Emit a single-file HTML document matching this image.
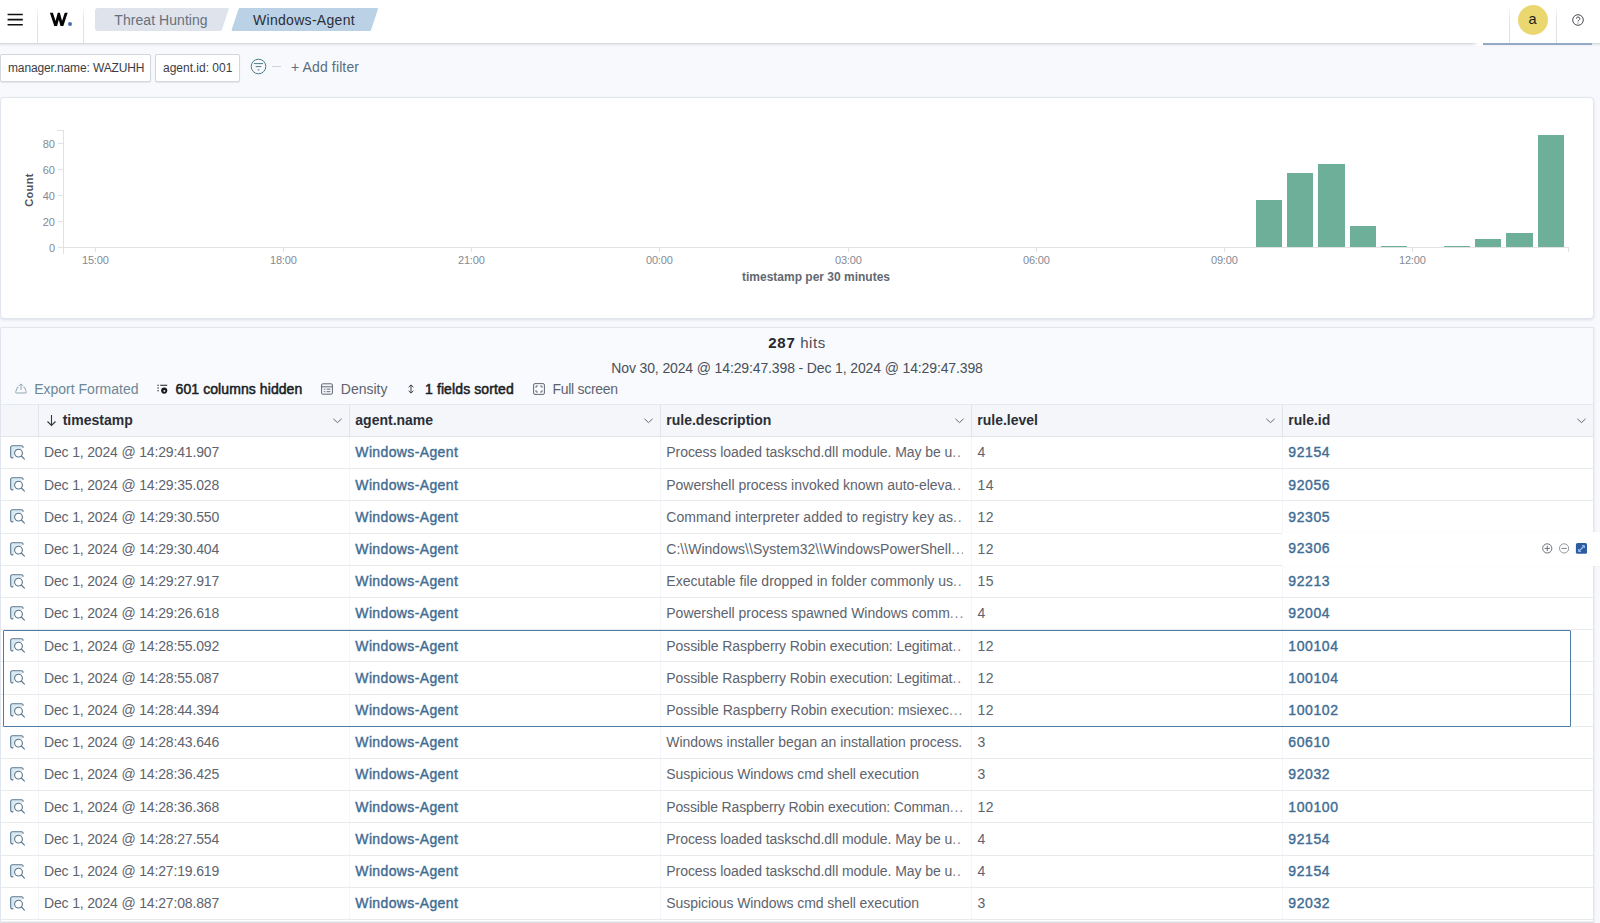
<!DOCTYPE html>
<html><head><meta charset="utf-8"><title>Threat Hunting</title>
<style>
*{box-sizing:border-box;margin:0;padding:0}
html,body{width:1600px;height:923px;overflow:hidden}
body{background:#f8f9fc;font-family:"Liberation Sans",sans-serif;color:#343741;position:relative;font-size:14px}
div,svg,span{position:absolute}
.hdr{left:0;top:0;width:1600px;height:44px;background:#fff;border-bottom:1px solid #d7d9de;box-shadow:0 1px 2px rgba(150,155,170,.22)}
.vd{width:1px;background:linear-gradient(#fff 15%,#dfe2e7 45%);top:0;height:43px}
.bc{top:9px;height:23px;font-size:14px;line-height:23px;text-align:center;white-space:nowrap}
.pill{top:54px;height:28px;background:#fff;border:1px solid #d2d6dd;border-radius:2px;font-size:12px;line-height:26px;color:#3a3d45;white-space:nowrap;padding-left:6px;box-shadow:0 1px 1px rgba(150,160,180,.2)}
.panel{background:#fff;border:1px solid #e1e6ee;border-radius:4px;box-shadow:0 1px 3px rgba(120,135,160,.22)}
.ax{font-size:11px;color:#848a93;white-space:nowrap;line-height:12px}
.bar{background:#6eaf99}
.tb{top:378.5px;height:20px;line-height:20px;font-size:14px;white-space:nowrap}
.sb{font-weight:400;color:#1a1c21;-webkit-text-stroke:0.5px #1a1c21}
.th{top:410.3px;height:20px;line-height:20px;font-size:14px;font-weight:700;color:#2b2e36;white-space:nowrap}
.clh{width:1px;background:#e1e5eb;top:404px;height:33px}
.cl{width:1px;background:#f5f6f9;top:437px;height:483px}
.rline{left:1px;width:1592px;height:1px;background:#e8eaee}
.c{height:20px;line-height:20px;font-size:14px;white-space:nowrap;color:#5e636d}
.ts{left:44px;letter-spacing:-0.16px}
.ag{left:355.3px;color:#3f6d94;-webkit-text-stroke:0.4px #3f6d94;letter-spacing:0.37px}
.ds{left:666.3px;width:296.6px;overflow:hidden}
.lv{left:977.6px;letter-spacing:0.3px}
.id{left:1288.3px;color:#3f6d94;-webkit-text-stroke:0.4px #3f6d94;letter-spacing:0.58px}
.insp{left:9.8px}
.chev{top:415px}
.ds i{font-style:normal;letter-spacing:0.9px;color:#80858e;position:static}

</style></head><body>
<!-- header -->
<div class="hdr"></div>
<svg style="left:7px;top:13px" width="17" height="14" viewBox="0 0 17 14"><path d="M0.6 1.5h15.2M0.6 6.6h15.2M0.6 11.7h15.2" stroke="#111" stroke-width="1.6" fill="none"/></svg>
<div class="vd" style="left:37px"></div>
<div class="vd" style="left:83px"></div>
<svg style="left:49px;top:12px" width="26" height="16" viewBox="0 0 26 16"><defs><clipPath id="wc"><rect x="0" y="0.8" width="20" height="13.1"/></clipPath></defs><path clip-path="url(#wc)" d="M1.76 -1.2L6.7 13.9 9.8 2.2 12.9 13.9 17.84 -1.2" stroke="#050505" stroke-width="2.8" fill="none" stroke-linejoin="miter" stroke-miterlimit="10"/><circle cx="21" cy="12" r="2.05" fill="#4872a8"/></svg>
<svg style="left:95px;top:8px" width="290" height="23" viewBox="0 0 290 23">
 <path d="M3 1H132.8L125.8 22H3a2 2 0 0 1-2-2V3a2 2 0 0 1 2-2z" fill="#dee3ec" stroke="#dee3ec" stroke-width="2" stroke-linejoin="round"/>
 <path d="M144.6 1H282L275 22H137.6z" fill="#bbd2e6" stroke="#bbd2e6" stroke-width="2" stroke-linejoin="round"/>
</svg>
<div class="bc" style="left:95px;width:132px;color:#69707d;letter-spacing:0.05px">Threat Hunting</div>
<div class="bc" style="left:232px;width:144px;color:#2b2e36;letter-spacing:0.3px">Windows-Agent</div>
<!-- right header -->
<div class="vd" style="left:1509px"></div>
<div class="vd" style="left:1556px"></div>
<div style="left:1517.5px;top:4.5px;width:30px;height:30px;border-radius:15px;background:#ebd770"></div>
<div style="left:1517.5px;top:4.5px;width:30px;height:30px;line-height:29px;text-align:center;font-size:14.5px;color:#1a1a1a">a</div>
<svg style="left:1571.3px;top:12.7px" width="14" height="14" viewBox="0 0 14 14" fill="none" stroke="#343741" stroke-width="0.9"><circle cx="7" cy="7" r="5.3"/><path d="M5.4 5.7a1.7 1.7 0 1 1 2.5 1.5c-.6.3-.9.7-.9 1.2" /><circle cx="7" cy="9.9" r=".5" fill="#343741" stroke="none"/></svg>
<div style="left:1472px;top:43px;width:11px;height:3px;background:linear-gradient(90deg,rgba(255,255,255,0),#fff 60%)"></div>
<div style="left:1483px;top:43.3px;width:109px;height:1.8px;background:#93aac5"></div>
<!-- filter bar -->
<div class="pill" style="left:0px;width:151px;padding-left:7px;letter-spacing:-0.13px">manager.name: WAZUHH</div>
<div class="pill" style="left:155px;width:85px;padding-left:7px">agent.id: 001</div>
<svg style="left:250px;top:58.3px" width="18" height="18" viewBox="0 0 18 18" fill="none" stroke="#4d7b85" stroke-width="1"><circle cx="8.5" cy="8.5" r="7.3"/><path d="M3.9 5.6h9.2M5.7 8.6h5.6M7.6 11.9h1.8"/></svg>
<div style="left:272px;top:66px;width:9px;height:1px;background:#cdd3dc"></div>
<div style="left:291px;top:57px;font-size:14px;line-height:20px;color:#5a6e80;white-space:nowrap;letter-spacing:0.13px">+ Add filter</div>

<div class="panel" style="left:0px;top:97px;width:1594px;height:222px"></div>
<div style="left:63px;top:130px;width:1px;height:124px;background:#e0e2e6"></div>
<div style="left:57px;top:130px;width:6px;height:1px;background:#e0e2e6"></div>
<div style="left:63px;top:247px;width:1506px;height:1px;background:#e0e2e6"></div>
<div style="left:1568px;top:247px;width:1px;height:5px;background:#e0e2e6"></div>
<div class="ax" style="left:30px;width:25px;text-align:right;top:137.6px">80</div>
<div style="left:58px;top:143px;width:5px;height:1px;background:#e0e2e6"></div>
<div class="ax" style="left:30px;width:25px;text-align:right;top:163.6px">60</div>
<div style="left:58px;top:169px;width:5px;height:1px;background:#e0e2e6"></div>
<div class="ax" style="left:30px;width:25px;text-align:right;top:189.6px">40</div>
<div style="left:58px;top:195px;width:5px;height:1px;background:#e0e2e6"></div>
<div class="ax" style="left:30px;width:25px;text-align:right;top:215.6px">20</div>
<div style="left:58px;top:221px;width:5px;height:1px;background:#e0e2e6"></div>
<div class="ax" style="left:30px;width:25px;text-align:right;top:241.6px">0</div>
<div style="left:58px;top:247px;width:5px;height:1px;background:#e0e2e6"></div>
<div style="left:-1.2px;top:182.9px;width:60px;height:14px;line-height:14px;text-align:center;font-size:11px;font-weight:700;letter-spacing:0.35px;color:#4d525c;transform:rotate(-90deg);transform-origin:center">Count</div>
<div class="ax" style="left:70.3px;width:50px;text-align:center;top:254px;letter-spacing:-0.18px">15:00</div>
<div style="left:94.6px;top:247px;width:1px;height:5px;background:#e0e2e6"></div>
<div class="ax" style="left:258.3px;width:50px;text-align:center;top:254px;letter-spacing:-0.18px">18:00</div>
<div style="left:282.6px;top:247px;width:1px;height:5px;background:#e0e2e6"></div>
<div class="ax" style="left:446.3px;width:50px;text-align:center;top:254px;letter-spacing:-0.18px">21:00</div>
<div style="left:470.6px;top:247px;width:1px;height:5px;background:#e0e2e6"></div>
<div class="ax" style="left:634.3px;width:50px;text-align:center;top:254px;letter-spacing:-0.18px">00:00</div>
<div style="left:658.6px;top:247px;width:1px;height:5px;background:#e0e2e6"></div>
<div class="ax" style="left:823.3px;width:50px;text-align:center;top:254px;letter-spacing:-0.18px">03:00</div>
<div style="left:847.6px;top:247px;width:1px;height:5px;background:#e0e2e6"></div>
<div class="ax" style="left:1011.3px;width:50px;text-align:center;top:254px;letter-spacing:-0.18px">06:00</div>
<div style="left:1035.6px;top:247px;width:1px;height:5px;background:#e0e2e6"></div>
<div class="ax" style="left:1199.3px;width:50px;text-align:center;top:254px;letter-spacing:-0.18px">09:00</div>
<div style="left:1223.6px;top:247px;width:1px;height:5px;background:#e0e2e6"></div>
<div class="ax" style="left:1387.3px;width:50px;text-align:center;top:254px;letter-spacing:-0.18px">12:00</div>
<div style="left:1411.6px;top:247px;width:1px;height:5px;background:#e0e2e6"></div>
<div style="left:716px;width:200px;text-align:center;top:269.5px;font-size:12px;line-height:14px;font-weight:700;color:#626872;white-space:nowrap">timestamp per 30 minutes</div>
<div class="bar" style="left:1255.6px;top:200px;width:26.4px;height:47.2px"></div>
<div class="bar" style="left:1286.9px;top:172.6px;width:26.4px;height:74.6px"></div>
<div class="bar" style="left:1318.2px;top:163.9px;width:26.4px;height:83.3px"></div>
<div class="bar" style="left:1349.6px;top:226px;width:26.4px;height:21.2px"></div>
<div class="bar" style="left:1381px;top:245.7px;width:26.4px;height:1.5px"></div>
<div class="bar" style="left:1443.7px;top:245.7px;width:26.4px;height:1.5px"></div>
<div class="bar" style="left:1475px;top:239px;width:26.4px;height:8.2px"></div>
<div class="bar" style="left:1506.4px;top:232.5px;width:26.4px;height:14.7px"></div>
<div class="bar" style="left:1537.8px;top:134.7px;width:26.4px;height:112.5px"></div>
<div class="panel" style="left:0px;top:327px;width:1594px;height:620px;background:#f8fafd;border-radius:2px 0 0 0"></div>
<div style="left:1px;top:404px;width:1592px;height:33px;background:#f4f6fa;border-top:1px solid #e6e9ef;border-bottom:1px solid #e1e5eb"></div>
<div style="left:1px;top:437px;width:1592px;height:486px;background:#fff"></div>
<div style="left:1px;top:920.5px;width:1592px;height:3px;background:linear-gradient(#f1f2f5 0,#f1f2f5 35%,#d9dbdf 50%)"></div>
<div style="left:0;width:1594px;top:332.6px;text-align:center;font-size:15px;line-height:20px;color:#4a4f59;white-space:nowrap;letter-spacing:0.55px"><b style="color:#25282f;letter-spacing:0.75px">287</b> hits</div>
<div style="left:0;width:1594px;top:358px;text-align:center;font-size:14px;line-height:20px;color:#4a4f59;white-space:nowrap;letter-spacing:-0.13px">Nov 30, 2024 @ 14:29:47.398 - Dec 1, 2024 @ 14:29:47.398</div>
<svg style="left:14.6px;top:383.4px" width="12" height="11" viewBox="0 0 12 11" fill="none" stroke="#8ea7b2" stroke-width="1"><path d="M3.6 4.3H2.4L0.8 8.6a1 1 0 0 0 1 1.4h8.4a1 1 0 0 0 1-1.4L9.6 4.3H8.4"/><path d="M6 7V1M4.1 2.8L6 .9l1.9 1.9"/></svg>
<div class="tb" style="left:34.2px;color:#6d8796">Export Formated</div>
<svg style="left:157px;top:384px" width="12" height="11" viewBox="0 0 12 11" fill="none" stroke="#1a1c21" stroke-width="1.1"><path d="M0.4 1.2h1.4M0.4 4h1.4M0.4 6.8h1.4M3.2 1.2h7"/><circle cx="7.2" cy="6.6" r="3.1" fill="#1a1c21" stroke="none"/><circle cx="7.4" cy="6.9" r="0.9" fill="#fff" stroke="none"/></svg>
<div class="tb sb" style="left:175.6px;letter-spacing:0.08px">601 columns hidden</div>
<svg style="left:321px;top:383px" width="12" height="12" viewBox="0 0 12 12" fill="none" stroke="#626873" stroke-width="1"><rect x="0.6" y="0.8" width="10.8" height="10.4" rx="1.2"/><path d="M0.6 3.8h10.8M2.8 6.2h1.5M5.6 6.2h3.8M2.8 8.7h1.5M5.6 8.7h3.8"/></svg>
<div class="tb" style="left:340.8px;color:#5d636e">Density</div>
<svg style="left:407px;top:384.3px" width="8" height="10" viewBox="0 0 8 10" fill="none" stroke="#3a3d45" stroke-width="1"><path d="M4 1v8M1.6 3.2L4 .9l2.4 2.3M1.6 6.8L4 9.1l2.4-2.3"/></svg>
<div class="tb sb" style="left:425px;letter-spacing:0.11px">1 fields sorted</div>
<svg style="left:533px;top:383px" width="12" height="12" viewBox="0 0 12 12" fill="none" stroke="#626873" stroke-width="1"><rect x="0.6" y="0.6" width="10.8" height="10.8" rx="1.4"/><path d="M3 4.8v-1.8h1.8M7.2 3h1.8v1.8M9 7.2v1.8h-1.8M4.8 9h-1.8v-1.8"/></svg>
<div class="tb" style="left:552.4px;color:#5d636e;letter-spacing:-0.27px">Full screen</div>
<div class="clh" style="left:38px"></div>
<div class="cl" style="left:38px"></div>
<div class="clh" style="left:349px"></div>
<div class="cl" style="left:349px"></div>
<div class="clh" style="left:660px"></div>
<div class="cl" style="left:660px"></div>
<div class="clh" style="left:971px"></div>
<div class="cl" style="left:971px"></div>
<div class="clh" style="left:1282px"></div>
<div class="cl" style="left:1282px"></div>
<svg style="left:45.5px;top:413.5px" width="11" height="13" viewBox="0 0 11 13" fill="none" stroke="#343741" stroke-width="1.1"><path d="M5.5 1v10.5M1.5 7.5l4 4 4-4"/></svg>
<div class="th" style="left:62.7px">timestamp</div>
<div class="th" style="left:355.3px">agent.name</div>
<div class="th" style="left:666.3px">rule.description</div>
<div class="th" style="left:977.3px">rule.level</div>
<div class="th" style="left:1288.3px">rule.id</div>
<svg class="chev" style="left:332px" width="11" height="11" viewBox="0 0 11 11" fill="none" stroke="#626873" stroke-width="1"><path d="M1.4 3.8l4.1 3.8 4.1-3.8"/></svg>
<svg class="chev" style="left:643px" width="11" height="11" viewBox="0 0 11 11" fill="none" stroke="#626873" stroke-width="1"><path d="M1.4 3.8l4.1 3.8 4.1-3.8"/></svg>
<svg class="chev" style="left:954px" width="11" height="11" viewBox="0 0 11 11" fill="none" stroke="#626873" stroke-width="1"><path d="M1.4 3.8l4.1 3.8 4.1-3.8"/></svg>
<svg class="chev" style="left:1265px" width="11" height="11" viewBox="0 0 11 11" fill="none" stroke="#626873" stroke-width="1"><path d="M1.4 3.8l4.1 3.8 4.1-3.8"/></svg>
<svg class="chev" style="left:1576px" width="11" height="11" viewBox="0 0 11 11" fill="none" stroke="#626873" stroke-width="1"><path d="M1.4 3.8l4.1 3.8 4.1-3.8"/></svg>
<div class="rline" style="top:468.1px"></div>
<svg class="insp" style="top:445.0px" width="16" height="16" viewBox="0 0 16 16" fill="none"><path d="M1.2 1.2h11.4v2.6H6.2L4 7v5.6H1.2z" fill="#d9e9f3"/><path d="M3.3 12.9H2.4a1.7 1.7 0 0 1-1.7-1.7V2.4A1.7 1.7 0 0 1 2.4.7h9a1.7 1.7 0 0 1 1.7 1.7v.4" stroke="#58758c" stroke-width="1.1"/><circle cx="8.5" cy="8.1" r="3.9" stroke="#58758c" stroke-width="1.1" fill="#fff"/><path d="M11.4 11l3 3.1" stroke="#58758c" stroke-width="1.1" stroke-linecap="round"/></svg>
<div class="c ts" style="top:442.4px">Dec 1, 2024 @ 14:29:41.907</div>
<div class="c ag" style="top:442.4px">Windows-Agent</div>
<div class="c ds" style="top:442.4px;letter-spacing:-0.061px">Process loaded taskschd.dll module. May be u<i>...</i></div>
<div class="c lv" style="top:442.4px">4</div>
<div class="c id" style="top:442.4px">92154</div>
<div class="rline" style="top:500.3px"></div>
<svg class="insp" style="top:477.2px" width="16" height="16" viewBox="0 0 16 16" fill="none"><path d="M1.2 1.2h11.4v2.6H6.2L4 7v5.6H1.2z" fill="#d9e9f3"/><path d="M3.3 12.9H2.4a1.7 1.7 0 0 1-1.7-1.7V2.4A1.7 1.7 0 0 1 2.4.7h9a1.7 1.7 0 0 1 1.7 1.7v.4" stroke="#58758c" stroke-width="1.1"/><circle cx="8.5" cy="8.1" r="3.9" stroke="#58758c" stroke-width="1.1" fill="#fff"/><path d="M11.4 11l3 3.1" stroke="#58758c" stroke-width="1.1" stroke-linecap="round"/></svg>
<div class="c ts" style="top:474.6px">Dec 1, 2024 @ 14:29:35.028</div>
<div class="c ag" style="top:474.6px">Windows-Agent</div>
<div class="c ds" style="top:474.6px;letter-spacing:-0.026px">Powershell process invoked known auto-eleva<i>...</i></div>
<div class="c lv" style="top:474.6px">14</div>
<div class="c id" style="top:474.6px">92056</div>
<div class="rline" style="top:532.5px"></div>
<svg class="insp" style="top:509.4px" width="16" height="16" viewBox="0 0 16 16" fill="none"><path d="M1.2 1.2h11.4v2.6H6.2L4 7v5.6H1.2z" fill="#d9e9f3"/><path d="M3.3 12.9H2.4a1.7 1.7 0 0 1-1.7-1.7V2.4A1.7 1.7 0 0 1 2.4.7h9a1.7 1.7 0 0 1 1.7 1.7v.4" stroke="#58758c" stroke-width="1.1"/><circle cx="8.5" cy="8.1" r="3.9" stroke="#58758c" stroke-width="1.1" fill="#fff"/><path d="M11.4 11l3 3.1" stroke="#58758c" stroke-width="1.1" stroke-linecap="round"/></svg>
<div class="c ts" style="top:506.8px">Dec 1, 2024 @ 14:29:30.550</div>
<div class="c ag" style="top:506.8px">Windows-Agent</div>
<div class="c ds" style="top:506.8px;letter-spacing:0.044px">Command interpreter added to registry key as<i>...</i></div>
<div class="c lv" style="top:506.8px">12</div>
<div class="c id" style="top:506.8px">92305</div>
<div class="rline" style="top:564.7px"></div>
<svg class="insp" style="top:541.6px" width="16" height="16" viewBox="0 0 16 16" fill="none"><path d="M1.2 1.2h11.4v2.6H6.2L4 7v5.6H1.2z" fill="#d9e9f3"/><path d="M3.3 12.9H2.4a1.7 1.7 0 0 1-1.7-1.7V2.4A1.7 1.7 0 0 1 2.4.7h9a1.7 1.7 0 0 1 1.7 1.7v.4" stroke="#58758c" stroke-width="1.1"/><circle cx="8.5" cy="8.1" r="3.9" stroke="#58758c" stroke-width="1.1" fill="#fff"/><path d="M11.4 11l3 3.1" stroke="#58758c" stroke-width="1.1" stroke-linecap="round"/></svg>
<div class="c ts" style="top:539.0px">Dec 1, 2024 @ 14:29:30.404</div>
<div class="c ag" style="top:539.0px">Windows-Agent</div>
<div class="c ds" style="top:539.0px;letter-spacing:0.021px">C:\\Windows\\System32\\WindowsPowerShell<i>...</i></div>
<div class="c lv" style="top:539.0px">12</div>
<div class="rline" style="top:596.9px"></div>
<svg class="insp" style="top:573.8px" width="16" height="16" viewBox="0 0 16 16" fill="none"><path d="M1.2 1.2h11.4v2.6H6.2L4 7v5.6H1.2z" fill="#d9e9f3"/><path d="M3.3 12.9H2.4a1.7 1.7 0 0 1-1.7-1.7V2.4A1.7 1.7 0 0 1 2.4.7h9a1.7 1.7 0 0 1 1.7 1.7v.4" stroke="#58758c" stroke-width="1.1"/><circle cx="8.5" cy="8.1" r="3.9" stroke="#58758c" stroke-width="1.1" fill="#fff"/><path d="M11.4 11l3 3.1" stroke="#58758c" stroke-width="1.1" stroke-linecap="round"/></svg>
<div class="c ts" style="top:571.2px">Dec 1, 2024 @ 14:29:27.917</div>
<div class="c ag" style="top:571.2px">Windows-Agent</div>
<div class="c ds" style="top:571.2px;letter-spacing:0.007px">Executable file dropped in folder commonly us<i>...</i></div>
<div class="c lv" style="top:571.2px">15</div>
<div class="c id" style="top:571.2px">92213</div>
<div class="rline" style="top:629.1px"></div>
<svg class="insp" style="top:606.0px" width="16" height="16" viewBox="0 0 16 16" fill="none"><path d="M1.2 1.2h11.4v2.6H6.2L4 7v5.6H1.2z" fill="#d9e9f3"/><path d="M3.3 12.9H2.4a1.7 1.7 0 0 1-1.7-1.7V2.4A1.7 1.7 0 0 1 2.4.7h9a1.7 1.7 0 0 1 1.7 1.7v.4" stroke="#58758c" stroke-width="1.1"/><circle cx="8.5" cy="8.1" r="3.9" stroke="#58758c" stroke-width="1.1" fill="#fff"/><path d="M11.4 11l3 3.1" stroke="#58758c" stroke-width="1.1" stroke-linecap="round"/></svg>
<div class="c ts" style="top:603.4px">Dec 1, 2024 @ 14:29:26.618</div>
<div class="c ag" style="top:603.4px">Windows-Agent</div>
<div class="c ds" style="top:603.4px;letter-spacing:-0.013px">Powershell process spawned Windows comm<i>...</i></div>
<div class="c lv" style="top:603.4px">4</div>
<div class="c id" style="top:603.4px">92004</div>
<div class="rline" style="top:661.3px"></div>
<svg class="insp" style="top:638.2px" width="16" height="16" viewBox="0 0 16 16" fill="none"><path d="M1.2 1.2h11.4v2.6H6.2L4 7v5.6H1.2z" fill="#d9e9f3"/><path d="M3.3 12.9H2.4a1.7 1.7 0 0 1-1.7-1.7V2.4A1.7 1.7 0 0 1 2.4.7h9a1.7 1.7 0 0 1 1.7 1.7v.4" stroke="#58758c" stroke-width="1.1"/><circle cx="8.5" cy="8.1" r="3.9" stroke="#58758c" stroke-width="1.1" fill="#fff"/><path d="M11.4 11l3 3.1" stroke="#58758c" stroke-width="1.1" stroke-linecap="round"/></svg>
<div class="c ts" style="top:635.6px">Dec 1, 2024 @ 14:28:55.092</div>
<div class="c ag" style="top:635.6px">Windows-Agent</div>
<div class="c ds" style="top:635.6px;letter-spacing:-0.092px">Possible Raspberry Robin execution: Legitimat<i>...</i></div>
<div class="c lv" style="top:635.6px">12</div>
<div class="c id" style="top:635.6px">100104</div>
<div class="rline" style="top:693.5px"></div>
<svg class="insp" style="top:670.4px" width="16" height="16" viewBox="0 0 16 16" fill="none"><path d="M1.2 1.2h11.4v2.6H6.2L4 7v5.6H1.2z" fill="#d9e9f3"/><path d="M3.3 12.9H2.4a1.7 1.7 0 0 1-1.7-1.7V2.4A1.7 1.7 0 0 1 2.4.7h9a1.7 1.7 0 0 1 1.7 1.7v.4" stroke="#58758c" stroke-width="1.1"/><circle cx="8.5" cy="8.1" r="3.9" stroke="#58758c" stroke-width="1.1" fill="#fff"/><path d="M11.4 11l3 3.1" stroke="#58758c" stroke-width="1.1" stroke-linecap="round"/></svg>
<div class="c ts" style="top:667.8px">Dec 1, 2024 @ 14:28:55.087</div>
<div class="c ag" style="top:667.8px">Windows-Agent</div>
<div class="c ds" style="top:667.8px;letter-spacing:-0.092px">Possible Raspberry Robin execution: Legitimat<i>...</i></div>
<div class="c lv" style="top:667.8px">12</div>
<div class="c id" style="top:667.8px">100104</div>
<div class="rline" style="top:725.7px"></div>
<svg class="insp" style="top:702.6px" width="16" height="16" viewBox="0 0 16 16" fill="none"><path d="M1.2 1.2h11.4v2.6H6.2L4 7v5.6H1.2z" fill="#d9e9f3"/><path d="M3.3 12.9H2.4a1.7 1.7 0 0 1-1.7-1.7V2.4A1.7 1.7 0 0 1 2.4.7h9a1.7 1.7 0 0 1 1.7 1.7v.4" stroke="#58758c" stroke-width="1.1"/><circle cx="8.5" cy="8.1" r="3.9" stroke="#58758c" stroke-width="1.1" fill="#fff"/><path d="M11.4 11l3 3.1" stroke="#58758c" stroke-width="1.1" stroke-linecap="round"/></svg>
<div class="c ts" style="top:700.0px">Dec 1, 2024 @ 14:28:44.394</div>
<div class="c ag" style="top:700.0px">Windows-Agent</div>
<div class="c ds" style="top:700.0px;letter-spacing:-0.05px">Possible Raspberry Robin execution: msiexec<i>....</i></div>
<div class="c lv" style="top:700.0px">12</div>
<div class="c id" style="top:700.0px">100102</div>
<div class="rline" style="top:757.9px"></div>
<svg class="insp" style="top:734.8px" width="16" height="16" viewBox="0 0 16 16" fill="none"><path d="M1.2 1.2h11.4v2.6H6.2L4 7v5.6H1.2z" fill="#d9e9f3"/><path d="M3.3 12.9H2.4a1.7 1.7 0 0 1-1.7-1.7V2.4A1.7 1.7 0 0 1 2.4.7h9a1.7 1.7 0 0 1 1.7 1.7v.4" stroke="#58758c" stroke-width="1.1"/><circle cx="8.5" cy="8.1" r="3.9" stroke="#58758c" stroke-width="1.1" fill="#fff"/><path d="M11.4 11l3 3.1" stroke="#58758c" stroke-width="1.1" stroke-linecap="round"/></svg>
<div class="c ts" style="top:732.2px">Dec 1, 2024 @ 14:28:43.646</div>
<div class="c ag" style="top:732.2px">Windows-Agent</div>
<div class="c ds" style="top:732.2px;letter-spacing:-0.045px">Windows installer began an installation process.</div>
<div class="c lv" style="top:732.2px">3</div>
<div class="c id" style="top:732.2px">60610</div>
<div class="rline" style="top:790.1px"></div>
<svg class="insp" style="top:767.0px" width="16" height="16" viewBox="0 0 16 16" fill="none"><path d="M1.2 1.2h11.4v2.6H6.2L4 7v5.6H1.2z" fill="#d9e9f3"/><path d="M3.3 12.9H2.4a1.7 1.7 0 0 1-1.7-1.7V2.4A1.7 1.7 0 0 1 2.4.7h9a1.7 1.7 0 0 1 1.7 1.7v.4" stroke="#58758c" stroke-width="1.1"/><circle cx="8.5" cy="8.1" r="3.9" stroke="#58758c" stroke-width="1.1" fill="#fff"/><path d="M11.4 11l3 3.1" stroke="#58758c" stroke-width="1.1" stroke-linecap="round"/></svg>
<div class="c ts" style="top:764.4px">Dec 1, 2024 @ 14:28:36.425</div>
<div class="c ag" style="top:764.4px">Windows-Agent</div>
<div class="c ds" style="top:764.4px;letter-spacing:-0.068px">Suspicious Windows cmd shell execution</div>
<div class="c lv" style="top:764.4px">3</div>
<div class="c id" style="top:764.4px">92032</div>
<div class="rline" style="top:822.3px"></div>
<svg class="insp" style="top:799.2px" width="16" height="16" viewBox="0 0 16 16" fill="none"><path d="M1.2 1.2h11.4v2.6H6.2L4 7v5.6H1.2z" fill="#d9e9f3"/><path d="M3.3 12.9H2.4a1.7 1.7 0 0 1-1.7-1.7V2.4A1.7 1.7 0 0 1 2.4.7h9a1.7 1.7 0 0 1 1.7 1.7v.4" stroke="#58758c" stroke-width="1.1"/><circle cx="8.5" cy="8.1" r="3.9" stroke="#58758c" stroke-width="1.1" fill="#fff"/><path d="M11.4 11l3 3.1" stroke="#58758c" stroke-width="1.1" stroke-linecap="round"/></svg>
<div class="c ts" style="top:796.6px">Dec 1, 2024 @ 14:28:36.368</div>
<div class="c ag" style="top:796.6px">Windows-Agent</div>
<div class="c ds" style="top:796.6px;letter-spacing:-0.165px">Possible Raspberry Robin execution: Comman<i>...</i></div>
<div class="c lv" style="top:796.6px">12</div>
<div class="c id" style="top:796.6px">100100</div>
<div class="rline" style="top:854.5px"></div>
<svg class="insp" style="top:831.4px" width="16" height="16" viewBox="0 0 16 16" fill="none"><path d="M1.2 1.2h11.4v2.6H6.2L4 7v5.6H1.2z" fill="#d9e9f3"/><path d="M3.3 12.9H2.4a1.7 1.7 0 0 1-1.7-1.7V2.4A1.7 1.7 0 0 1 2.4.7h9a1.7 1.7 0 0 1 1.7 1.7v.4" stroke="#58758c" stroke-width="1.1"/><circle cx="8.5" cy="8.1" r="3.9" stroke="#58758c" stroke-width="1.1" fill="#fff"/><path d="M11.4 11l3 3.1" stroke="#58758c" stroke-width="1.1" stroke-linecap="round"/></svg>
<div class="c ts" style="top:828.8px">Dec 1, 2024 @ 14:28:27.554</div>
<div class="c ag" style="top:828.8px">Windows-Agent</div>
<div class="c ds" style="top:828.8px;letter-spacing:-0.061px">Process loaded taskschd.dll module. May be u<i>...</i></div>
<div class="c lv" style="top:828.8px">4</div>
<div class="c id" style="top:828.8px">92154</div>
<div class="rline" style="top:886.7px"></div>
<svg class="insp" style="top:863.6px" width="16" height="16" viewBox="0 0 16 16" fill="none"><path d="M1.2 1.2h11.4v2.6H6.2L4 7v5.6H1.2z" fill="#d9e9f3"/><path d="M3.3 12.9H2.4a1.7 1.7 0 0 1-1.7-1.7V2.4A1.7 1.7 0 0 1 2.4.7h9a1.7 1.7 0 0 1 1.7 1.7v.4" stroke="#58758c" stroke-width="1.1"/><circle cx="8.5" cy="8.1" r="3.9" stroke="#58758c" stroke-width="1.1" fill="#fff"/><path d="M11.4 11l3 3.1" stroke="#58758c" stroke-width="1.1" stroke-linecap="round"/></svg>
<div class="c ts" style="top:861.0px">Dec 1, 2024 @ 14:27:19.619</div>
<div class="c ag" style="top:861.0px">Windows-Agent</div>
<div class="c ds" style="top:861.0px;letter-spacing:-0.061px">Process loaded taskschd.dll module. May be u<i>...</i></div>
<div class="c lv" style="top:861.0px">4</div>
<div class="c id" style="top:861.0px">92154</div>
<div class="rline" style="top:918.9px"></div>
<svg class="insp" style="top:895.8px" width="16" height="16" viewBox="0 0 16 16" fill="none"><path d="M1.2 1.2h11.4v2.6H6.2L4 7v5.6H1.2z" fill="#d9e9f3"/><path d="M3.3 12.9H2.4a1.7 1.7 0 0 1-1.7-1.7V2.4A1.7 1.7 0 0 1 2.4.7h9a1.7 1.7 0 0 1 1.7 1.7v.4" stroke="#58758c" stroke-width="1.1"/><circle cx="8.5" cy="8.1" r="3.9" stroke="#58758c" stroke-width="1.1" fill="#fff"/><path d="M11.4 11l3 3.1" stroke="#58758c" stroke-width="1.1" stroke-linecap="round"/></svg>
<div class="c ts" style="top:893.2px">Dec 1, 2024 @ 14:27:08.887</div>
<div class="c ag" style="top:893.2px">Windows-Agent</div>
<div class="c ds" style="top:893.2px;letter-spacing:-0.068px">Suspicious Windows cmd shell execution</div>
<div class="c lv" style="top:893.2px">3</div>
<div class="c id" style="top:893.2px">92032</div>
<!-- focused cell row 4 rule.id -->
<div style="left:1282px;top:532px;width:318px;height:34px;background:#fff;box-shadow:0 0 2px rgba(150,160,180,.10)"></div>
<div class="c id" style="top:538px">92306</div>
<svg style="left:1540px;top:541px" width="50" height="15" viewBox="0 0 50 15" fill="none" stroke="#69707a" stroke-width="1"><circle cx="7.25" cy="7.4" r="4.6"/><path d="M4.6 7.4h5.3M7.25 4.75v5.3"/><circle cx="24.1" cy="7.4" r="4.6" stroke="#8e949d"/><path d="M21.4 7.4h5.4" stroke="#7d838c"/><rect x="35.9" y="2.1" width="11.1" height="10.7" rx="1.6" fill="#2e5d9f" stroke="none"/><path d="M39.2 9.9l4.6-4.6" stroke="#9cc4f5" stroke-width="1.3"/><path d="M42 4.6h2.4v2.4M38.6 8v2.4h2.4" stroke="#9cc4f5" stroke-width="1" /></svg>
<!-- selection rectangle -->
<div style="left:3px;top:629.8px;width:1568px;height:97.4px;border:1.6px solid #4d7ba5;border-radius:1px"></div>

</body></html>
